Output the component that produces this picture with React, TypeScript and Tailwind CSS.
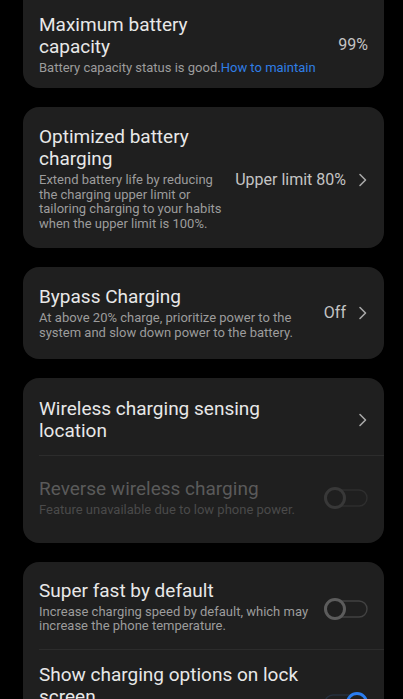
import React from "react";

const Chevron = () => (
  <svg width="10" height="16" viewBox="0 0 10 16" fill="none" className="shrink-0">
    <path d="M2 2.5 L7.5 8 L2 13.5" stroke="#a8a8a8" strokeWidth="1.6" strokeLinecap="round" strokeLinejoin="round" />
  </svg>
);

const Toggle = ({ on = false, dim = false }: { on?: boolean; dim?: boolean }) => {
  const ring = on ? "#2a7df0" : dim ? "#383838" : "#5c5c5c";
  const track = on ? "#26303e" : dim ? "#2e2e2e" : "#424242";
  return (
    <svg width="46" height="24" viewBox="0 0 46 24" className="shrink-0">
      <rect x="2" y="4" width="42" height="16" rx="8" fill="none" stroke={track} strokeWidth="1.4" />
      <circle cx={on ? 34 : 12} cy="12" r="9.5" fill="#1f1f1f" stroke={ring} strokeWidth="3" />
    </svg>
  );
};

const Title = ({ children, dim = false }: { children: React.ReactNode; dim?: boolean }) => (
  <div className={`text-[19px] leading-[22px] ${dim ? "text-[#5a5a5a]" : "text-[#e8e8e8]"}`}>{children}</div>
);

const Sub = ({ children, dim = false }: { children: React.ReactNode; dim?: boolean }) => (
  <div className={`mt-[3px] text-[13px] leading-[14.5px] ${dim ? "text-[#4a4a4a]" : "text-[#9c9c9c]"}`}>{children}</div>
);

export default function App() {
  return (
    <div
      className="h-[699px] w-[403px] overflow-hidden bg-black pl-[23px] pr-[19px]"
      style={{ fontFamily: 'Roboto, "Noto Sans", sans-serif' }}
    >
      {/* Card 1 */}
      <div className="flex h-[88px] items-center rounded-b-[16px] bg-[#1f1f1f] pl-4 pr-4 pt-[15px] pb-[13px]">
        <div className="flex-1">
          <Title>
            Maximum battery
            <br />
            capacity
          </Title>
          <Sub>
            Battery capacity status is good.<span className="text-[#2f7ee6]">How to maintain</span>
          </Sub>
        </div>
        <div className="text-[16px] text-[#c4c4c4]">99%</div>
      </div>

      {/* Card 2 */}
      <div className="mt-[19px] flex items-center rounded-[16px] bg-[#1f1f1f] pl-4 pr-4 pt-[19px] pb-[17px]">
        <div className="w-[186px]">
          <Title>
            Optimized battery
            <br />
            charging
          </Title>
          <Sub>
            Extend battery life by reducing the charging upper limit or tailoring charging to your habits when the upper limit is 100%.
          </Sub>
        </div>
        <div className="ml-auto flex items-center gap-[12px] pt-[3px]">
          <span className="text-[16px] text-[#c4c4c4]">Upper limit 80%</span>
          <Chevron />
        </div>
      </div>

      {/* Card 3 */}
      <div className="mt-[19px] flex items-center rounded-[16px] bg-[#1f1f1f] pl-4 pr-4 pt-[19px] pb-[19px]">
        <div className="w-[268px]">
          <Title>Bypass Charging</Title>
          <Sub>At above 20% charge, prioritize power to the system and slow down power to the battery.</Sub>
        </div>
        <div className="ml-auto flex items-center gap-[12px]">
          <span className="text-[16px] text-[#c4c4c4]">Off</span>
          <Chevron />
        </div>
      </div>

      {/* Card 4 */}
      <div className="mt-[19px] rounded-[16px] bg-[#1f1f1f]">
        <div className="flex h-[77px] items-center pl-4 pr-4 pt-[6px]">
          <div className="flex-1">
            <Title>
              Wireless charging sensing
              <br />
              location
            </Title>
          </div>
          <Chevron />
        </div>
        <div className="ml-4 h-px bg-[#2c2c2c]" />
        <div className="flex items-center pl-4 pr-[15px] pt-[22px] pb-[25px]">
          <div className="flex-1">
            <Title dim>Reverse wireless charging</Title>
            <Sub dim>Feature unavailable due to low phone power.</Sub>
          </div>
          <Toggle dim />
        </div>
      </div>

      {/* Card 5 */}
      <div className="mt-[19px] rounded-t-[16px] bg-[#1f1f1f]">
        <div className="flex items-center pl-4 pr-[15px] pt-[18px] pb-[15px]">
          <div className="w-[272px]">
            <Title>Super fast by default</Title>
            <Sub>Increase charging speed by default, which may increase the phone temperature.</Sub>
          </div>
          <div className="ml-auto pt-[4px]">
            <Toggle />
          </div>
        </div>
        <div className="ml-4 h-px bg-[#2c2c2c]" />
        <div className="flex items-start pl-4 pr-[15px] pt-[14px] pb-[16px]">
          <div className="w-[272px]">
            <Title>
              Show charging options on lock
              <br />
              screen
            </Title>
          </div>
          <div className="ml-auto mt-[27px]">
            <Toggle on />
          </div>
        </div>
      </div>
    </div>
  );
}
